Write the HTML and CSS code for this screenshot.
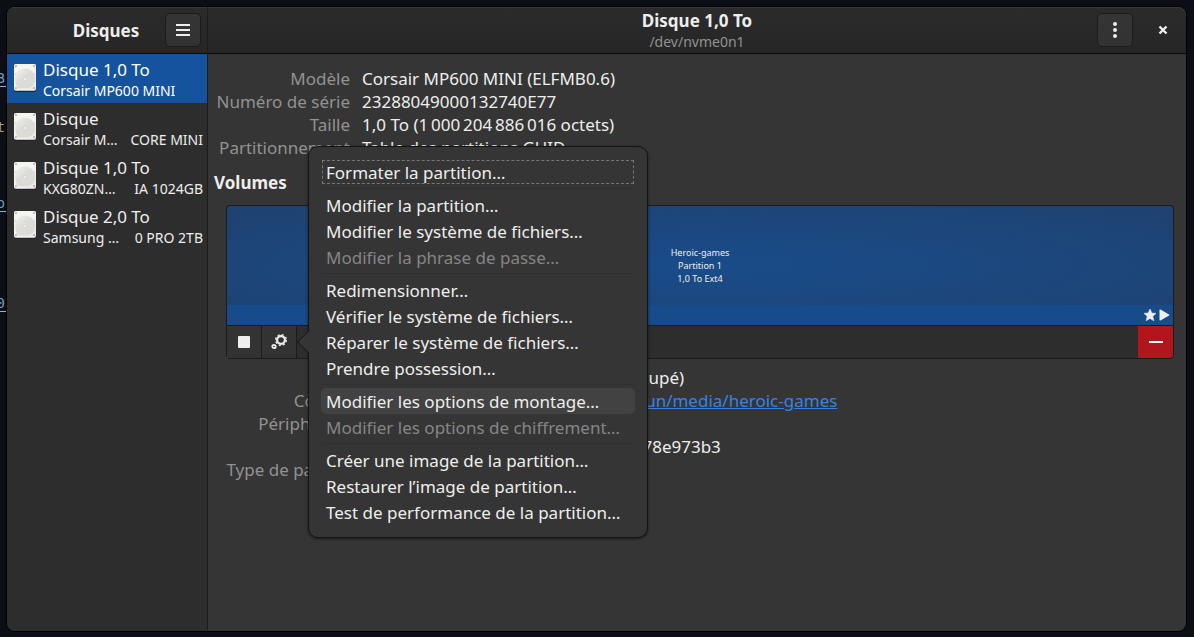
FILE: index.html
```html
<!DOCTYPE html>
<html lang="fr">
<head>
<meta charset="utf-8">
<title>Disques</title>
<link rel="stylesheet" href="styles.css">
</head>
<body>
<svg class="defs" aria-hidden="true">
  <defs>
    <linearGradient id="case" x1="0" y1="0" x2="1" y2="1"><stop offset="0" stop-color="#f4f4f2"/><stop offset=".5" stop-color="#f6f5f4"/><stop offset="1" stop-color="#e8e7e4"/></linearGradient>
    <linearGradient id="platter" x1="0" y1="0" x2="1" y2="1"><stop offset="0" stop-color="#f2f2f0"/><stop offset=".45" stop-color="#dddcd8"/><stop offset="1" stop-color="#dad9d5"/></linearGradient>
    <symbol id="drive" viewBox="0 0 22 28">
      <rect y="2" width="22" height="26" rx="2" fill="#241f31"/>
      <rect width="22" height="27" rx="2" fill="#c0bfbc"/>
      <rect width="22" height="26" rx="2" fill="url(#case)"/>
      <path d="M11 4.500a10 10 0 0 1 10 10.500c0 6-4 9.500-9 9.500H4C2.500 22 1 19 1 15A10 10 0 0 1 11 4.500z" fill="url(#platter)"/>
      <circle cx="11" cy="15" r="1.500" fill="#f6f5f4" stroke="#c9c8c4" stroke-width=".5"/>
      <g fill="#b0afac"><circle cx="2" cy="2" r="1"/><circle cx="20" cy="2" r="1"/><circle cx="2" cy="24" r="1"/><circle cx="20" cy="24" r="1"/><circle cx="1.500" cy="10" r=".5"/><circle cx="20.500" cy="10" r=".5"/></g>
    </symbol>
  </defs>
</svg>
<div class="backdrop" aria-hidden="true">
  <span class="bit bit-a">B</span><span class="bit bit-b">t</span><span class="bit bit-c">b</span><span class="bit bit-d">0</span>
</div>
<div class="window">
  <aside class="sidebar">
    <header class="bar side-bar">
      <h1 class="title app-title">Disques</h1>
      <button class="bar-button" aria-label="Menu principal"><svg width="14" height="14" viewBox="0 0 14 14"><path d="M0 1h14v2H0zM0 6h14v2H0zM0 11h14v2H0z" fill="#eeeeec"/></svg></button>
    </header>
    <nav class="drives">
      <button class="drive selected"><svg class="drive-icon"><use href="#drive"/></svg><span class="drive-text"><span class="drive-name">Disque 1,0 To</span><span class="drive-model">Corsair MP600 MINI</span></span></button>
      <button class="drive"><svg class="drive-icon"><use href="#drive"/></svg><span class="drive-text"><span class="drive-name">Disque</span><span class="drive-model"><span>Corsair M…</span><span>CORE MINI</span></span></span></button>
      <button class="drive"><svg class="drive-icon"><use href="#drive"/></svg><span class="drive-text"><span class="drive-name">Disque 1,0 To</span><span class="drive-model"><span>KXG80ZN…</span><span>IA 1024GB</span></span></span></button>
      <button class="drive"><svg class="drive-icon"><use href="#drive"/></svg><span class="drive-text"><span class="drive-name">Disque 2,0 To</span><span class="drive-model"><span>Samsung …</span><span>0 PRO 2TB</span></span></span></button>
    </nav>
  </aside>
  <main class="main">
    <header class="bar main-bar">
      <div class="heading"><h2 class="title">Disque 1,0 To</h2><p class="subtitle">/dev/nvme0n1</p></div>
      <div class="bar-actions">
        <button class="bar-button" aria-label="Menu du disque"><svg width="4" height="18" viewBox="0 0 4 18"><g fill="#eeeeec"><circle cx="2" cy="3" r="2"/><circle cx="2" cy="9" r="2"/><circle cx="2" cy="15" r="2"/></g></svg></button>
        <button class="close" aria-label="Fermer"><svg width="10" height="10" viewBox="0 0 10 10"><path d="M1.500 1.500l7 7M8.500 1.500l-7 7" stroke="#eeeeec" stroke-width="2.400"/></svg></button>
      </div>
    </header>
    <div class="content">
      <dl class="details drive-details">
        <dt>Modèle</dt><dd>Corsair MP600 MINI (ELFMB0.6)</dd>
        <dt>Numéro de série</dt><dd>23288049000132740E77</dd>
        <dt>Taille</dt><dd>1,0 To (1&#x202f;000&#x202f;204&#x202f;886&#x202f;016 octets)</dd>
        <dt>Partitionnement</dt><dd>Table des partitions GUID</dd>
      </dl>
      <h3 class="section">Volumes</h3>
      <div class="volumes">
        <div class="map">
          <p class="part-label">Heroic-games<br>Partition 1<br>1,0 To Ext4</p>
          <div class="strip">
            <svg width="26" height="12" viewBox="0 0 26 12"><path d="M6 0l1.800 4 4.200.4-3.200 2.800 1 4.500L6 9.400l-3.800 2.300 1-4.500L0 4.400 4.200 4z" fill="#eeeeec" stroke="#eeeeec" stroke-width=".6"/><path d="M15.500 1.200q0-1 1-.6l8.500 5q.8.500 0 1l-8.500 4.800q-1 .4-1-.6z" fill="#eeeeec"/></svg>
          </div>
        </div>
        <div class="toolbar">
          <button class="tool" aria-label="Démonter"><svg width="12" height="12" viewBox="0 0 12 12"><rect width="12" height="12" rx="1" fill="#eeeeec"/></svg></button>
          <div class="menu-anchor">
            <button class="tool" aria-label="Options de la partition"><svg width="16" height="16" viewBox="0 0 16 16" fill="none" stroke="#eeeeec"><circle cx="10" cy="6" r="3.900" stroke-width="2.200"/><circle cx="10" cy="6" r="5.400" stroke-width="1.300" stroke-dasharray="2.120 2.120"/><circle cx="3" cy="12.500" r="1.700" stroke-width="1.800"/></svg></button>
            <div class="popover" role="menu">
              <svg class="arrow" width="12" height="22" viewBox="0 0 12 22"><path d="M12 0L1 11l11 11z" fill="#353535"/><path d="M11 0.500L.7 11 11 21.500" fill="none" stroke="#141414"/></svg>
              <div class="group"><button class="item focused" role="menuitem">Formater la partition…</button></div>
              <div class="group"><button class="item" role="menuitem">Modifier la partition…</button><button class="item" role="menuitem">Modifier le système de fichiers…</button><button class="item" role="menuitem" disabled>Modifier la phrase de passe…</button></div>
              <div class="group"><button class="item" role="menuitem">Redimensionner…</button><button class="item" role="menuitem">Vérifier le système de fichiers…</button><button class="item" role="menuitem">Réparer le système de fichiers…</button><button class="item" role="menuitem">Prendre possession…</button></div>
              <div class="group"><button class="item hovered" role="menuitem">Modifier les options de montage…</button><button class="item" role="menuitem" disabled>Modifier les options de chiffrement…</button></div>
              <div class="group"><button class="item" role="menuitem">Créer une image de la partition…</button><button class="item" role="menuitem">Restaurer l’image de partition…</button><button class="item" role="menuitem">Test de performance de la partition…</button></div>
            </div>
          </div>
          <button class="tool delete" aria-label="Supprimer la partition"><svg width="14" height="2" viewBox="0 0 14 2"><path d="M0 0h14v2H0z" fill="#fff"/></svg></button>
        </div>
      </div>
      <dl class="details volume-details">
        <dt>Taille</dt><dd>1,0 To — 52,4 Go libres (95,0 % occupé)</dd>
        <dt>Contenu</dt><dd>Ext4 (version 1.0) — Montée sur <a href="#">/run/media/heroic-games</a></dd>
        <dt>Périphérique</dt><dd>/dev/nvme0n1p1</dd>
        <dt>UUID</dt><dd>bd0dbd4b-bd36-4bdd-bdbd-bd0b78e973b3</dd>
        <dt>Type de partition</dt><dd>Linux Filesystem</dd>
      </dl>
    </div>
  </main>
</div>
</body>
</html>
```
FILE: styles.css
```css
* { box-sizing: border-box; margin: 0; padding: 0; }
body {
  height: 100vh;
  padding: 7px 8px 6px 7px;
  background: #0b0f15;
  color: #eeeeec;
  font: 17px/23px "Noto Sans", sans-serif;
  overflow: hidden;
}
button { font: inherit; color: inherit; border: 0; background: none; }
svg { display: block; }
.defs { position: absolute; width: 0; height: 0; }

.backdrop { position: absolute; left: 0; top: 0; width: 7px; height: 100%; overflow: hidden; }
.bit { position: absolute; right: 2px; font: 14px/16px "DejaVu Sans Mono", monospace; color: #6f9cc0; }
.bit::after { content: ""; position: absolute; left: 0; right: -2px; bottom: -1px; height: 1px; background: #82b8e0; }
.bit-a { top: 70px; }
.bit-b { top: 119px; color: #a0a4a8; }
.bit-b::after { display: none; }
.bit-c { top: 195px; }
.bit-d { top: 295px; }

.window {
  position: relative;
  display: flex;
  height: 100%;
  border-radius: 8px;
  background: #353535;
  box-shadow: 0 0 0 1px #000;
}
.sidebar {
  display: flex;
  flex-direction: column;
  flex: 0 0 201px;
  border-right: 1px solid #1c1c1c;
  border-radius: 8px 0 0 8px;
  background: #2d2d2d;
  overflow: hidden;
}
.main { flex: 1; min-width: 0; }
.bar {
  display: flex;
  align-items: center;
  height: 47px;
  border-bottom: 1px solid #070707;
  background: linear-gradient(#2b2b2b, #262626);
  box-shadow: inset 0 1px #383838;
}
.side-bar { padding-right: 6px; }
.main-bar { position: relative; border-radius: 0 8px 0 0; justify-content: center; }
.title { font-size: 17px; line-height: 22px; font-weight: 700; }
.app-title { flex: 1; text-align: center; padding: 2px 0 0 40px; }
.heading { text-align: center; }
.subtitle { font-size: 14px; line-height: 19px; color: #929291; }
.bar-actions { position: absolute; right: 8px; display: flex; align-items: center; gap: 15px; }
.bar-button {
  display: grid;
  place-items: center;
  width: 36px;
  height: 34px;
  border: 1px solid #1b1b1b;
  border-radius: 5px;
  background: linear-gradient(#353535, #323232);
}
.close { display: grid; place-items: center; width: 30px; height: 34px; }

.drives { display: flex; flex-direction: column; }
.drive { display: flex; align-items: center; gap: 7px; height: 49px; padding: 0 4px 0 7px; text-align: left; }
.drive.selected { background: #15539e; color: #fff; }
.drive-icon { flex: none; width: 22px; height: 28px; margin-bottom: 2px; }
.drive-text { flex: 1; min-width: 0; display: flex; flex-direction: column; }
.drive-name { line-height: 23px; }
.drive-model { display: flex; justify-content: space-between; font-size: 14px; line-height: 19px; white-space: nowrap; }

.content { padding: 13px 12px 0 6px; }
.details { display: grid; column-gap: 12px; grid-auto-rows: 23px; white-space: nowrap; }
.details dt { text-align: right; color: #929291; }
.drive-details { grid-template-columns: 136px 1fr; }
.volume-details { grid-template-columns: 136px 1fr; padding: 7px 0 0 12px; }
.section { padding: 12px 0 11px; font-size: 17px; line-height: 23px; font-weight: 700; }
a { color: #3584e4; text-decoration: underline; }

.volumes { margin-left: 12px; }
.map {
  display: flex;
  flex-direction: column;
  height: 120px;
  border: 1px solid #1b1b1b;
  border-bottom: 0;
  border-radius: 4px 4px 0 0;
  background: radial-gradient(ellipse at center, #194c8a, #1f4270);
  overflow: hidden;
}
.part-label { flex: 1; padding-top: 20px; display: grid; place-content: center; text-align: center; font-size: 9px; line-height: 13px; }
.strip { height: 20px; padding: 4px 3px 0 0; display: flex; justify-content: flex-end; background: #184b8a; }
.toolbar {
  display: flex;
  height: 34px;
  border: 1px solid #1b1b1b;
  border-radius: 0 0 4px 4px;
  background: #2d2d2d;
}
.tool { display: grid; place-items: center; width: 35px; height: 32px; border-right: 1px solid #1b1b1b; background: #333; }
.delete { margin-left: auto; border: 0; border-radius: 0 0 4px 0; background: #b2161d; }
.menu-anchor { position: relative; }

.popover {
  position: absolute;
  z-index: 2;
  left: calc(100% + 11px);
  top: 50%;
  transform: translateY(-50%);
  width: 340px;
  padding: 12px;
  border: 1px solid #141414;
  border-radius: 10px;
  background: #353535;
  box-shadow: 0 1px 3px rgba(0, 0, 0, .5);
}
.arrow { position: absolute; left: -12px; top: 50%; margin-top: -11px; }
.group + .group { margin-top: 3px; padding-top: 3px; border-top: 1px solid #303030; }
.item { display: block; width: 100%; height: 26px; padding: 1px 5px 0; border-radius: 5px; text-align: left; line-height: 25px; white-space: nowrap; }
.item:disabled { color: #858585; }
.item.hovered { background: #424242; }
.item.focused { outline: 1px dashed #777; outline-offset: -2px; border-radius: 2px; }
```
